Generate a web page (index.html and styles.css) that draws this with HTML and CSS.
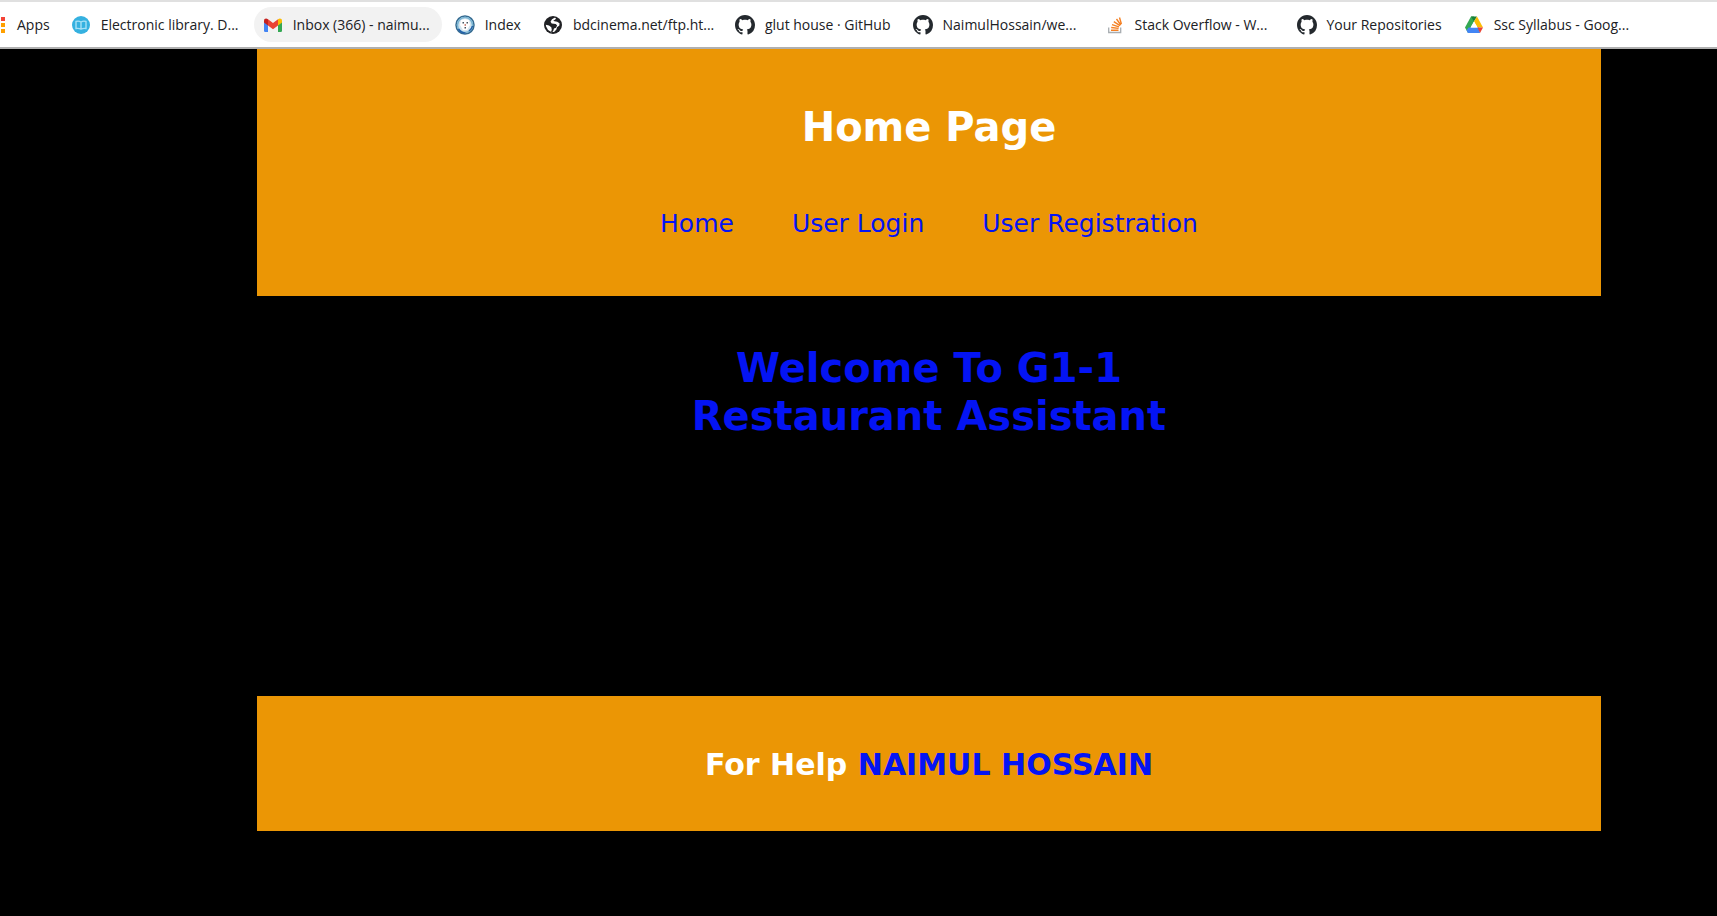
FILE: index.html
```html
<!DOCTYPE html>
<html lang="en">
<head>
<meta charset="utf-8">
<title>Home Page</title>
<link rel="stylesheet" href="styles.css">
</head>
<body>
<svg class="sprite" aria-hidden="true">
  <symbol id="github" viewBox="0 0 16 16"><path fill="#24292e" d="M8 0C3.58 0 0 3.58 0 8c0 3.54 2.29 6.53 5.47 7.59.4.07.55-.17.55-.38 0-.19-.01-.82-.01-1.49-2.01.37-2.53-.49-2.69-.94-.09-.23-.48-.94-.82-1.13-.28-.15-.68-.52-.01-.53.63-.01 1.08.58 1.23.82.72 1.21 1.87.87 2.33.66.07-.52.28-.87.51-1.07-1.78-.2-3.64-.89-3.64-3.95 0-.87.31-1.59.82-2.15-.08-.2-.36-1.02.08-2.12 0 0 .67-.21 2.2.82.64-.18 1.32-.27 2-.27s1.36.09 2 .27c1.53-1.04 2.2-.82 2.2-.82.44 1.1.16 1.92.08 2.12.51.56.82 1.27.82 2.15 0 3.07-1.87 3.75-3.65 3.95.29.25.54.73.54 1.48 0 1.07-.01 1.93-.01 2.2 0 .21.15.46.55.38A8.01 8.01 0 0 0 16 8c0-4.42-3.58-8-8-8z"/></symbol>
</svg>
<nav class="bookmarks" aria-label="Bookmarks">
  <a class="bookmark apps" href="#">
    <svg class="dots" viewBox="0 0 5 18"><path fill="#f44336" d="M1 1h4v4H1z"/><path fill="#ffa000" d="M1 7h4v4H1zM1 13h4v4H1z"/></svg>
    <span>Apps</span>
  </a>
  <a class="bookmark wide" href="#">
    <svg class="icon" viewBox="0 0 20 20"><circle cx="10" cy="10" r="9" fill="#35b1e0"/><path d="M5 6.500q2.500-1 5 .5q2.500-1.500 5-.5v7q-2.500-.5-5 .5q-2.500-1-5-.5zM10 7v7" fill="none" stroke="#a5e0f5" stroke-width="1.400"/></svg>
    <span>Electronic library. D...</span>
  </a>
  <a class="bookmark wide active" href="#">
    <svg class="icon" viewBox="0 0 20 20"><path fill="#4285f4" d="M1 6l4 3v8H2.300Q1 17 1 15.700z"/><path fill="#34a853" d="M19 6l-4 3v8h2.700q1.300 0 1.300-1.300z"/><path fill="#fbbc04" d="M15 4.300q2-1.500 3.400-.2.600.5.600 1.900v1.500L15 10.500z"/><path fill="#c5221f" d="M5 4.300Q3 2.800 1.600 4.100 1 4.600 1 6v1.500l4 3z"/><path fill="#ea4335" d="M5 4.300l5 3.800 5-3.800v6.200l-5 3.700-5-3.700z"/></svg>
    <span>Inbox (366) - naimu...</span>
  </a>
  <a class="bookmark" href="#">
    <svg class="icon" viewBox="0 0 20 20"><circle cx="10" cy="10" r="9" fill="#d4e5ee" stroke="#356b91" stroke-width="1.500"/><circle cx="10" cy="10" r="7.500" fill="none" stroke="#79b4d3" stroke-width="1.500"/><path fill="#fff" d="M6 5l4-1 4 1 1 5-3 5H8l-3-5z"/><path fill="#46545e" d="M7.500 7H9v1.500H7.500zM11.500 7H13v1.500h-1.500zM9.500 12H11v1.500H9.500z"/><path fill="#d18c80" d="M9.500 9h1.500v2H9.500z"/><path d="M3.500 14q2.500 4 7 4M14 16q3-2 3.500-5" fill="none" stroke="#2460a8" stroke-width="1.500"/></svg>
    <span>Index</span>
  </a>
  <a class="bookmark wide" href="#">
    <svg class="icon" viewBox="0 0 20 20"><circle cx="10" cy="10" r="9" fill="#202124"/><path fill="#fff" d="M11.500 2.800L9 4.300 7.500 6.700l1.200 1.800 4.100.5 1.300 1.600-1.100 2.200-2 .8-1 2.800-2.200 1.100 1-2.800-.5-2.500-2.300-1.600-3.200-.8.300 1.700q1 3.500 4.800 5.200l3.200.3 2.300-2.600.6-2.100 2.400-1.800.1-2.200-2.300-1.600-2.600-.4-1.400-.6 2.100-1.100.7-1.500z"/></svg>
    <span>bdcinema.net/ftp.ht...</span>
  </a>
  <a class="bookmark" href="#">
    <svg class="icon"><use href="#github"/></svg>
    <span>glut house · GitHub</span>
  </a>
  <a class="bookmark wide" href="#">
    <svg class="icon"><use href="#github"/></svg>
    <span>NaimulHossain/we...</span>
  </a>
  <a class="bookmark wide" href="#">
    <svg class="icon" viewBox="0 0 20 20"><path d="M3.700 12.500v5h12v-5" fill="none" stroke="#a8adb1" stroke-width="1.300"/><path d="M6 15.200h7.500M6.200 12.500l7.400.9M7 9.600l7 2.200M8.800 6.600l6.200 4M11.500 4l4.400 6M14.500 2.500l1.900 6.500" fill="none" stroke="#f48024" stroke-width="1.400"/></svg>
    <span>Stack Overflow - W...</span>
  </a>
  <a class="bookmark" href="#">
    <svg class="icon"><use href="#github"/></svg>
    <span>Your Repositories</span>
  </a>
  <a class="bookmark wide" href="#">
    <svg class="icon" viewBox="0 0 20 20"><path fill="#34a853" d="M7 1.500h3v5L4 18l-3-5.500z"/><path fill="#188038" d="M7 1.500h6l-3 5z"/><path fill="#fbbc04" d="M10 6.500l3-5 6 11h-5.500z"/><path fill="#4285f4" d="M4.500 12.500H15L16 18H4l-1.500-2.500z"/><path fill="#ea4335" d="M13.500 12.500H19L16 18z"/><path fill="#fff" d="M10 6.500l3.500 6h-7z"/></svg>
    <span>Ssc Syllabus - Goog...</span>
  </a>
</nav>
<div class="page">
  <header class="banner">
    <h1>Home Page</h1>
    <nav class="menu" aria-label="Main">
      <a href="#">Home</a>
      <a href="#">User Login</a>
      <a href="#">User Registration</a>
    </nav>
  </header>
  <main class="welcome">
    <h2>Welcome To G1-1<br>Restaurant Assistant</h2>
  </main>
  <footer class="help">
    <h3>For Help <a href="#">NAIMUL HOSSAIN</a></h3>
  </footer>
</div>
</body>
</html>
```
FILE: styles.css
```css
* {
  box-sizing: border-box;
}

body {
  margin: 0;
  background: #000;
  font-family: Verdana, "DejaVu Sans", sans-serif;
}

a {
  color: #0414f4;
  text-decoration: none;
}

.sprite {
  display: none;
}

.bookmarks {
  display: flex;
  gap: 4px;
  padding: 5px 0;
  overflow: hidden;
  background: #fff;
  border-top: 2px solid #e0e0e0;
  border-bottom: 2px solid #b0b0b0;
  font: 14px/20px "Segoe UI", "Open Sans", sans-serif;
}

.bookmark {
  display: flex;
  flex: none;
  align-items: center;
  gap: 10px;
  height: 35px;
  padding: 0 9px;
  border-radius: 18px;
  color: #202124;
  white-space: nowrap;
}

.wide {
  width: 188px;
}

.apps {
  gap: 12px;
  padding: 0 8px 0 0;
}

.active {
  background: #f2f2f2;
}

.icon {
  flex: none;
  width: 20px;
  height: 20px;
}

.dots {
  width: 5px;
  height: 18px;
}

.page {
  margin: 0 116px 0 257px;
  text-align: center;
}

.banner {
  padding: 54px 0 56px;
  background: #eb9605;
  color: #fff;
}

h1,
h2,
h3 {
  margin: 0;
}

h1,
h2 {
  font-size: 40px;
  line-height: 48px;
}

.menu {
  display: flex;
  justify-content: center;
  gap: 58px;
  margin-top: 57px;
  font-size: 25px;
  line-height: 32px;
}

.welcome {
  min-height: 400px;
  padding-top: 48px;
}

.welcome h2 {
  color: #0414f4;
}

.help {
  padding: 51px 0 48px;
  background: #eb9605;
  color: #fff;
}

h3 {
  font-size: 30px;
  line-height: 36px;
}
```
